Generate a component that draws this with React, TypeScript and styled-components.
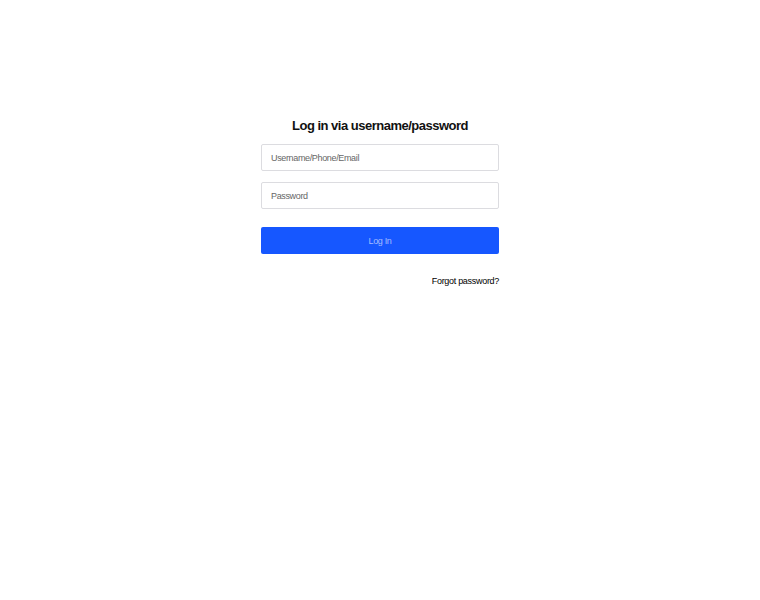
import React from 'react';
import styled, {createGlobalStyle} from "styled-components";

const GlobalStyle = createGlobalStyle`
  html, body {
    margin: 0;
    padding: 0;
    background: #ffffff;
    font-family: "Liberation Sans", Arial, sans-serif;
  }
`;

const Page = styled.div`
  width: 100%;
  min-height: 600px;
  display: flex;
  justify-content: center;
  padding-top: 116px;
  box-sizing: border-box;
`;

const Form = styled.form`
  width: 238px;
  display: flex;
  flex-direction: column;
`;

const Title = styled.h1`
  margin: 0 0 9px 0;
  font-size: 13px;
  line-height: 19px;
  font-weight: bold;
  letter-spacing: -0.5px;
  text-align: center;
  color: #111111;
`;

const Field = styled.input`
  height: 27px;
  box-sizing: border-box;
  border: 1px solid #dcdce0;
  border-radius: 2px;
  padding: 0 9px;
  margin-bottom: 11px;
  font-family: "Liberation Sans", Arial, sans-serif;
  font-size: 9px;
  letter-spacing: -0.35px;
  color: #333;
  outline: none;

  &::placeholder {
    color: #666666;
  }
`;

const Submit = styled.button`
  margin-top: 7px;
  height: 27px;
  border: none;
  border-radius: 2px;
  background-color: #1657ff;
  color: #a5bcff;
  font-family: "Liberation Sans", Arial, sans-serif;
  font-size: 9px;
  letter-spacing: -0.35px;
  cursor: pointer;
`;

const Footer = styled.div`
  display: flex;
  justify-content: flex-end;
  margin-top: 22px;

  a {
    color: #000000;
    font-size: 9px;
    letter-spacing: -0.3px;
    text-decoration: none;
  }
`;

function App(): React.JSX.Element {
  return (
    <>
      <GlobalStyle />
      <Page>
        <Form onSubmit={(e) => e.preventDefault()}>
          <Title>Log in via username/password</Title>
          <Field type="text" placeholder="Username/Phone/Email" />
          <Field type="password" placeholder="Password" />
          <Submit type="submit">Log In</Submit>
          <Footer>
            <a href="#">Forgot password?</a>
          </Footer>
        </Form>
      </Page>
    </>
  )
}

export default App;
